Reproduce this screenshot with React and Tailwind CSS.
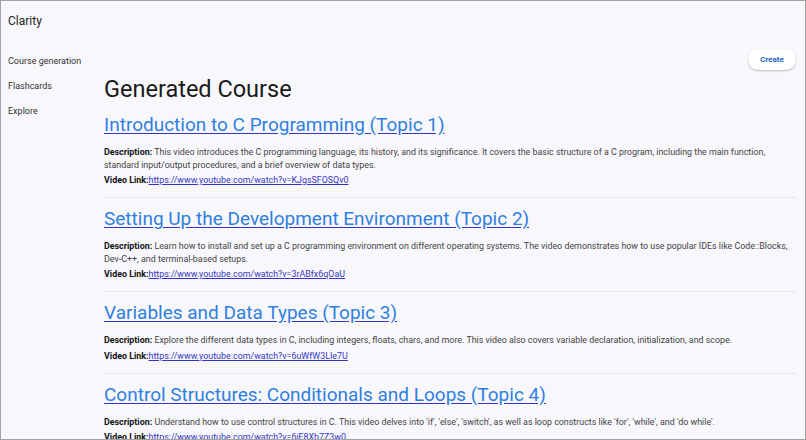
import React from "react";

const TOPICS = [
  {
    title: "Introduction to C Programming (Topic 1)",
    description:
      "This video introduces the C programming language, its history, and its significance. It covers the basic structure of a C program, including the main function, standard input/output procedures, and a brief overview of data types.",
    link: "https://www.youtube.com/watch?v=KJgsSFOSQv0",
  },
  {
    title: "Setting Up the Development Environment (Topic 2)",
    description:
      "Learn how to install and set up a C programming environment on different operating systems. The video demonstrates how to use popular IDEs like Code::Blocks, Dev-C++, and terminal-based setups.",
    link: "https://www.youtube.com/watch?v=3rABfx6qOaU",
  },
  {
    title: "Variables and Data Types (Topic 3)",
    description:
      "Explore the different data types in C, including integers, floats, chars, and more. This video also covers variable declaration, initialization, and scope.",
    link: "https://www.youtube.com/watch?v=6uWfW3LIe7U",
  },
  {
    title: "Control Structures: Conditionals and Loops (Topic 4)",
    description:
      "Understand how to use control structures in C. This video delves into 'if', 'else', 'switch', as well as loop constructs like 'for', 'while', and 'do while'.",
    link: "https://www.youtube.com/watch?v=6iF8Xb7Z3w0",
  },
];

const NAV_ITEMS = ["Course generation", "Flashcards", "Explore"];

const App = () => {
  return (
    <div
      className="h-[440px] w-[806px] overflow-hidden border border-[#a3a3a3] bg-[#f8f8fc] text-[#222]"
      style={{ fontFamily: "Roboto, 'Liberation Sans', sans-serif" }}
    >
      {/* Top bar */}
      <div className="px-[7px] pt-[10px] text-[12px] leading-[20px] text-[#222]">Clarity</div>

      <div className="mt-[18px] flex">
        {/* Sidebar */}
        <nav className="w-[103px] shrink-0 px-[7px]">
          {NAV_ITEMS.map((item) => (
            <div key={item} className="flex h-[25px] items-center text-[9px] text-[#333]">
              {item}
            </div>
          ))}
        </nav>

        {/* Main content */}
        <main className="flex-1 pr-[9px]">
          <div className="flex justify-end">
            <button className="h-[21px] w-[48px] rounded-full bg-white text-[8px] font-bold text-[#2a66c4] shadow-[0_1px_2px_rgba(0,0,0,0.25)]">
              Create
            </button>
          </div>

          <h1 className="mt-[5px] mb-[1px] text-[23.5px] leading-[28px] text-[#1a1a1a]">
            Generated Course
          </h1>

          {TOPICS.map((topic) => (
            <section key={topic.title} className="border-b border-[#e6e6ea] pt-[7px] pb-[11px]">
              <h2 className="h-[28px] text-[19px] leading-[28px]">
                <a
                  href="#"
                  className="text-[#2f7fe0] underline decoration-[#3535c4] underline-offset-2"
                >
                  {topic.title}
                </a>
              </h2>
              <p className="mt-[7px] text-[8.9px] leading-[12.5px] text-[#444]">
                <span className="font-bold text-[#111]">Description:</span> {topic.description}
              </p>
              <p className="mt-[3px] text-[8.9px] leading-[12px]">
                <span className="font-bold text-[#111]">Video Link:</span>
                <a href="#" className="text-[#3535c4] underline">
                  {topic.link}
                </a>
              </p>
            </section>
          ))}
        </main>
      </div>
    </div>
  );
};

export default App;
